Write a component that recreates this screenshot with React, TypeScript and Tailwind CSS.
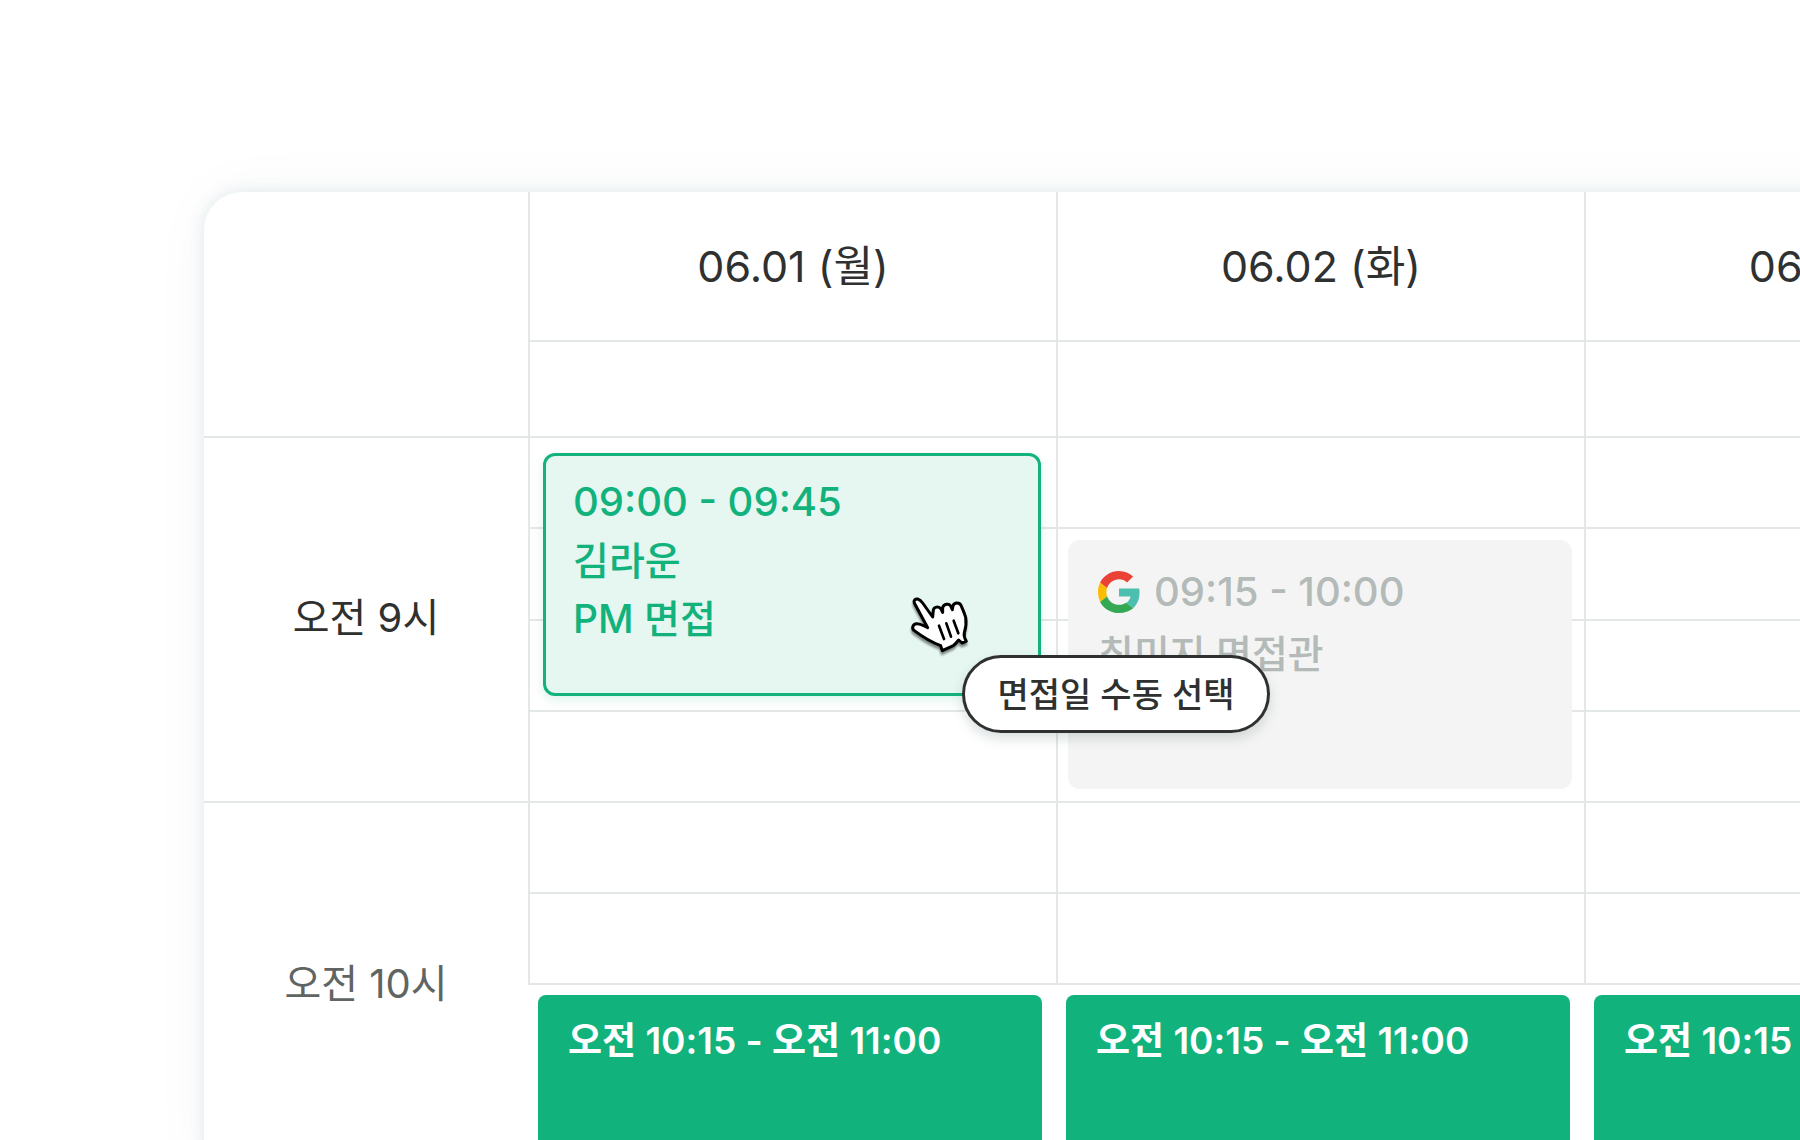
const FONT = "font-[Inter,'Noto_Sans_CJK_KR',sans-serif]";

interface Day {
  id: string;
  date: string;
  weekday: string;
}

const DAYS: Day[] = [
  { id: 'mon', date: '06.01', weekday: '월' },
  { id: 'tue', date: '06.02', weekday: '화' },
  { id: 'wed', date: '06.03', weekday: '수' },
];

function GoogleIcon() {
  return (
    <svg viewBox="0 0 48 48" className="size-[42px] shrink-0" aria-hidden="true">
      <path fill="#4dbfae" d="M47.5 24.5c0-1.6-.1-3.1-.4-4.5H24v9.1h13.2c-.6 3-2.3 5.6-4.9 7.3l7.9 6.1c4.6-4.3 7.3-10.5 7.3-18z" />
      <path fill="#34a853" d="M24 48c6.5 0 12-2.1 16.2-5.500l-7.900-6.100c-2.200 1.500-5 2.300-8.300 2.300-6.300 0-11.700-4.200-13.600-9.900l-8.100 6.200C6.300 42.900 14.500 48 24 48z" />
      <path fill="#fbbc05" d="M10.400 28.800c-.5-1.500-.8-3.100-.8-4.800s.3-3.300.8-4.800l-8.100-6.200C.8 16.300 0 20.100 0 24s.9 7.700 2.500 11z" />
      <path fill="#ea4335" d="M24 9.500c3.600 0 6.700 1.200 9.200 3.600l6.900-6.900C35.900 2.400 30.500 0 24 0 14.600 0 6.400 5.400 2.400 13.200l8.100 6.200C12.300 13.700 17.700 9.500 24 9.500z" />
    </svg>
  );
}

const HAND =
  'M46 69C43 61 49 56 56 57C63 59 67 63 71 69L101 111L103 90C105 81 119 77 126 87L131 97L131 82C135 72 149 69 155 78L160 89L162 77C166 67 181 66 186 76C190 85 196 98 200 112C203 131 200 146 196 158C194 168 197 176 202 184L189 189L179 180C174 186 168 193 163 197L130 212L125 197C100 188 70 170 46 152C37 145 41 132 53 131C66 130 74 138 86 143Z';

function HandCursor() {
  return (
    <svg viewBox="30 45 186 186" className="size-[62px]" aria-hidden="true">
      <path d={HAND} transform="translate(-1 9)" fill="#000" stroke="#000" strokeWidth="8" className="opacity-45 blur-[3px]" />
      <path d={HAND} fill="#fff" stroke="#000" strokeWidth="9" strokeLinejoin="round" />
      <path d="M120 137L135 177M142 130L156 170M164 122L178 160" stroke="#000" strokeWidth="8" strokeLinecap="round" />
    </svg>
  );
}

function SelectedEvent() {
  return (
    <button
      type="button"
      className="absolute inset-x-[15px] top-[15px] h-[243px] flex flex-col items-start rounded-xl border-3 border-[#12b27c] bg-[#e6f6f1] px-[27px] pt-4 text-left text-[40px] font-medium text-[#12b27c] shadow-[0_4px_12px_rgba(18,178,124,0.15)]"
    >
      <span className="leading-[60px]">09:00 - 09:45</span>
      <span className="leading-[58px] text-[39px]">김라운</span>
      <span className="leading-[58px] text-[39px]">PM 면접</span>
    </button>
  );
}

function GoogleEvent() {
  return (
    <div className="absolute inset-x-3 top-[102px] h-[249px] rounded-xl bg-[#f4f4f4] px-[30px] pt-[21px] font-medium text-[#b3bab8]">
      <div className="flex items-center gap-3.5">
        <GoogleIcon />
        <span className="text-[40px] leading-[62px]">09:15 - 10:00</span>
      </div>
      <p className="text-[39px] leading-[62px]">최미지 면접관</p>
    </div>
  );
}

function BookedEvent() {
  return (
    <button
      type="button"
      className="absolute left-2.5 right-3.5 top-[192px] h-[260px] flex items-start rounded-lg bg-[#12b27c] px-[30px] pt-[22px] text-left text-[37px] leading-[48px] font-semibold whitespace-nowrap text-white"
    >
      오전 10:15 - 오전 11:00
    </button>
  );
}

function DragTooltip() {
  return (
    <div className="absolute left-[381px] top-[157px] z-10">
      <HandCursor />
      <div
        role="tooltip"
        className="mt-[-2px] ml-[53px] flex h-[78px] w-[308px] items-center justify-center rounded-full border-3 border-[#2f3130] bg-white text-[34px] font-medium whitespace-nowrap text-[#2f3130] shadow-[0_6px_12px_rgba(60,90,90,0.18)]"
      >
        면접일 수동 선택
      </div>
    </div>
  );
}

function DayColumn({ day }: { day: Day }) {
  return (
    <section aria-label={`${day.date} (${day.weekday})`}>
      <h2 className="flex h-[150px] items-center justify-center border-b-2 border-l-2 border-[#e3e8e7] text-[43px] leading-[60px] text-[#2f3130]">
        {day.date} ({day.weekday})
      </h2>
      <div className="h-24 border-b-2 border-l-2 border-[#e3e8e7]" />

      {/* 9시 */}
      <div className="relative grid h-[365px] grid-rows-4">
        {[0, 15, 30, 45].map((minute) => (
          <div key={minute} className="border-b-2 border-l-2 border-[#e3e8e7]" />
        ))}
        {day.id === 'mon' && <SelectedEvent />}
        {day.id === 'tue' && <GoogleEvent />}
        {day.id === 'mon' && <DragTooltip />}
      </div>

      {/* 10시 */}
      <div className="relative h-[365px]">
        <div className="h-[91px] border-b-2 border-l-2 border-[#e3e8e7]" />
        <div className="h-[91px] border-b-2 border-l-2 border-[#e3e8e7]" />
        <BookedEvent />
      </div>
    </section>
  );
}

export default function App() {
  return (
    <main lang="ko" className={`h-screen overflow-hidden bg-white pt-48 pl-[204px] ${FONT}`}>
      <div className="grid w-max min-w-full grid-cols-[324px_repeat(3,minmax(528px,1fr))] rounded-tl-[38px] bg-white shadow-[0_0_16px_rgba(80,140,160,0.16),0_0_60px_rgba(0,0,0,0.04)]">
        <div>
          <div className="h-[246px] border-b-2 border-[#e3e8e7]" />
          <div className="flex h-[365px] items-center justify-center border-b-2 border-[#e3e8e7] pb-1 text-[40px] text-[#2f3130]">
            오전 9시
          </div>
          <div className="flex h-[365px] items-center justify-center pb-1 text-[40px] text-[#5f6563]">
            오전 10시
          </div>
        </div>
        {DAYS.map((day) => (
          <DayColumn key={day.id} day={day} />
        ))}
      </div>
    </main>
  );
}
